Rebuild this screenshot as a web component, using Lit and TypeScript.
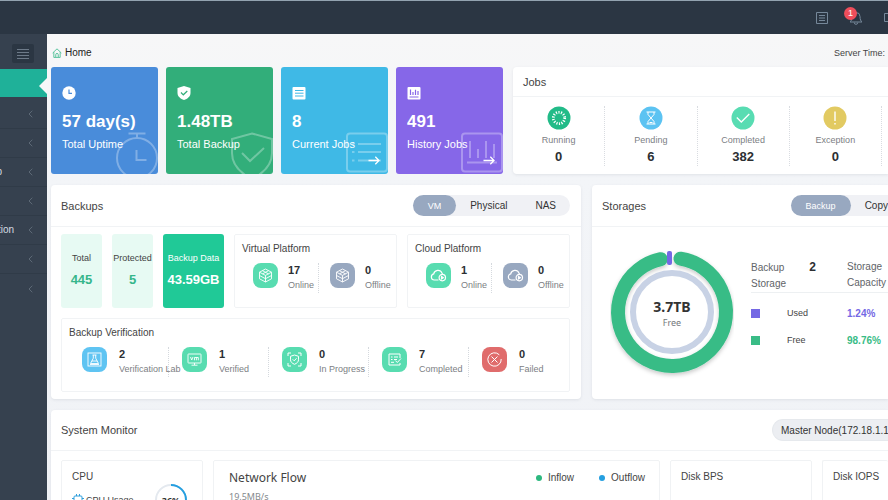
import { LitElement, html, css, svg, nothing, TemplateResult } from "lit";
import { customElement, property, state } from "lit/decorators.js";
import { classMap } from "lit/directives/class-map.js";

const icons: Record<string, TemplateResult> = {
  home: html`<svg viewBox="0 0 12 12" width="10" height="10" fill="none" stroke="currentColor"><path d="M.8 6 6 1l5.200 5M2.200 5v6.300h7.600V5"/><path d="M4.500 11V8a1.500 1.500 0 0 1 3 0v3"/></svg>`,
  list: html`<svg viewBox="0 0 12 12" width="12" height="12" fill="none" stroke="currentColor"><path d="M.5.5h11v11H.5zM3 3.500h6M3 6h6M3 8.500h6"/></svg>`,
  bell: html`<svg viewBox="0 0 14 14" width="14" height="14" fill="none" stroke="currentColor"><path d="M7 1.500a4 4 0 0 0-4 4c0 3-.8 4.500-2 5.500h12c-1.200-1-2-2.500-2-5.500a4 4 0 0 0-4-4zM5.200 11.500a1.800 1.800 0 0 0 3.600 0"/></svg>`,
  frame: html`<svg viewBox="0 0 4 12" width="4" height="12" fill="none" stroke="currentColor"><path d="M5 1.500H.5v8H5"/></svg>`,
  menu: html`<svg viewBox="0 0 12 12" width="12" height="12" stroke="currentColor"><path d="M0 1.500h12M0 4.500h12M0 7.500h12M0 10.500h12"/></svg>`,
  chevron: html`<svg viewBox="0 0 5 8" width="5" height="8" fill="none" stroke="currentColor"><path d="M4.300.7 1 4l3.300 3.300"/></svg>`,
  arrow: html`<svg viewBox="0 0 12 9" width="12" height="9" fill="none" stroke="currentColor" stroke-width="1.300"><path d="M.5 4.500h10.500M7.300.8 11 4.500 7.300 8.200"/></svg>`,
  clock: html`<svg viewBox="0 0 14 14" width="14" height="14"><circle cx="7" cy="7" r="6.700" fill="#fff"/><path d="M7 3.500V7.300h3" fill="none" stroke="#498cda" stroke-width="1.200"/></svg>`,
  shield: html`<svg viewBox="0 0 14 14" width="14" height="14"><path d="M7 0 13.500 2v5c0 3.500-3 5.800-6.500 7C3.500 12.800.5 10.500.5 7V2z" fill="#fff"/><path d="m4 6.500 2.300 2.300L10.300 5" fill="none" stroke="#32ae7a" stroke-width="1.200"/></svg>`,
  listSolid: html`<svg viewBox="0 0 14 14" width="14" height="14"><rect x=".5" y="1" width="13" height="12.500" rx="1" fill="#fff"/><path d="M3 4.500h8.500M3 7.200h8.500M3 10h8.500" stroke="#3fb9e6"/></svg>`,
  chartSolid: html`<svg viewBox="0 0 14 14" width="14" height="14"><rect x=".5" y="1" width="13" height="12.500" rx="1" fill="#fff"/><path d="M3.500 3.500v5.500M6 6v3M8.500 3.800V9M11 5v4M2.500 11h9" stroke="#8667e8" stroke-width="1.200"/></svg>`,
  clockBig: html`<svg viewBox="0 0 42 42" width="42" height="42" fill="none" stroke="#fff" stroke-width="2"><circle cx="21" cy="26" r="20"/><path d="M12.500 1.500h17M21 1.500V6M20.500 18v10h10"/></svg>`,
  shieldBig: html`<svg viewBox="0 0 42 42" width="42" height="42" fill="none" stroke="#fff" stroke-width="2"><path d="M21 1.500 41 7v14c0 12-8 20-20 26C9 41 1 33 1 21V7z"/><path d="m11 21 8 8 14-13"/></svg>`,
  listBig: html`<svg viewBox="0 0 42 42" width="42" height="42" fill="none" stroke="#fff" stroke-width="2"><rect x="1" y="1.500" width="40" height="38" rx="3"/><path d="M12 12h23M12 20h23M12 28.500h23M6 12h2.500M6 20h2.500M6 28.500h2.500"/></svg>`,
  chartBig: html`<svg viewBox="0 0 42 42" width="42" height="42" fill="none" stroke="#fff" stroke-width="2"><rect x="1" y="1.500" width="40" height="38" rx="3"/><path d="M9 9v17M17 17v9M25 9v17M33 12v14M6 30.500h30"/></svg>`,
  running: html`<svg viewBox="0 0 24 24" width="24" height="24"><circle cx="12" cy="12" r="11.500" fill="#22bb88"/><circle cx="12" cy="12" r="5.700" fill="none" stroke="#fff" stroke-width="2.800" stroke-dasharray="1.150 1.408"/></svg>`,
  pending: html`<svg viewBox="0 0 24 24" width="24" height="24"><circle cx="12" cy="12" r="11.500" fill="#5cc3f2"/><path d="M7.500 6h9M7.500 18h9M9 6v2.500L12 12l3-3.500V6M9 18v-2.500L12 12l3 3.500V18M10.500 16.500h3" fill="none" stroke="#fff"/></svg>`,
  completed: html`<svg viewBox="0 0 24 24" width="24" height="24"><circle cx="12" cy="12" r="11.500" fill="#58dcb2"/><path d="m5.800 11.500 4.500 4.500 8-8" fill="none" stroke="#fff" stroke-width="1.300"/></svg>`,
  exception: html`<svg viewBox="0 0 24 24" width="24" height="24"><circle cx="12" cy="12" r="11.500" fill="#e2ca62"/><path d="M12 5.500v9.500M12 17v1.500" stroke="#fff" stroke-width="1.400"/></svg>`,
  cube: html`<svg viewBox="0 0 15 15" width="15" height="15" fill="none" stroke="#fff" stroke-width=".9"><path d="M7.500 1 13.500 4.200v6.600l-6 3.200-6-3.200V4.200zM1.500 4.200l6 3.200 6-3.200M7.500 7.400V14M4.500 2.700l6 3.200M10.500 2.700l-6 3.200M1.500 7.500l6 3.200 6-3.200"/></svg>`,
  cloud: html`<svg viewBox="0 0 17 15" width="17" height="15" fill="none" stroke="#fff" stroke-width="1.200"><path d="M8.500 12H4.300a3.100 3.100 0 0 1-.6-6.100 4.400 4.400 0 0 1 8.300-.9l.5 1"/><circle cx="12.300" cy="9.600" r="3.200"/><path d="M11.500 8.500v2.500l1.800-1.200z" fill="#fff"/></svg>`,
  lab: html`<svg viewBox="0 0 15 15" width="15" height="15" fill="none" stroke="#fff" stroke-width=".9"><rect x="1" y="1" width="13" height="13"/><path d="M5.500 3h4M6.300 3v3.200L3.500 11.500h8L8.700 6.200V3M5 9h5M3 12.500h9"/></svg>`,
  vm: html`<svg viewBox="0 0 15 15" width="15" height="15" fill="none" stroke="#fff" stroke-width=".9"><rect x="1" y="2" width="13" height="9" rx=".5"/><path d="M4.500 13.200h6M7.500 11v2M3.500 5l1.200 3L6 5M7.500 8.300V5.500h3.800v2.800M9.400 5.500v2.800"/></svg>`,
  scan: html`<svg viewBox="0 0 15 15" width="15" height="15" fill="none" stroke="#fff" stroke-width="1"><path d="M1 4V1h3M11 1h3v3M14 11v3h-3M4 14H1v-3M7.500 3l4 1.300v3.500c0 2-1.500 3.500-4 4.500-2.500-1-4-2.500-4-4.500V4.300z"/><path d="m5.700 7.300 1.500 1.500 2.300-2.500"/></svg>`,
  check: html`<svg viewBox="0 0 15 15" width="15" height="15" fill="none" stroke="#fff" stroke-width="1"><path d="M13 6V2H2v11h11v-2M7 5h4M7 7.500h3M4 5h1.500M4 7.500h1.500M4 10.300h3M8.300 8.500l2 2L14 6.500"/></svg>`,
  fail: html`<svg viewBox="0 0 15 15" width="15" height="15" fill="none" stroke="#fff" stroke-width="1"><path d="M12.300 2.800a6.700 6.700 0 1 0 1.900 4.200M4.500 4.500l6 6M10.500 4.500l-6 6"/></svg>`,
  chip: html`<svg viewBox="0 0 12 12" width="12" height="12" fill="none" stroke="#2f9fdc"><rect x="2" y="2" width="8" height="8" rx="1"/><path d="M4.500 0v2M7.500 0v2M4.500 10v2M7.500 10v2M0 4.500h2M0 7.500h2M10 4.500h2M10 7.500h2"/></svg>`,
};

const base = css`
  * { box-sizing: border-box; }
  svg { display: block; flex: none; }
  button, select { font: inherit; color: inherit; border: 0; background: none; padding: 0; margin: 0; }
  button { cursor: pointer; }
  a { color: inherit; text-decoration: none; }
  h2, h3, p { margin: 0; font-weight: 400; }
`;

@customElement("app-header")
class AppHeader extends LitElement {
  static styles = [base, css`
    :host { display: flex; justify-content: flex-end; align-items: center; height: 34px; border-top: 1px solid #93a3b0; background: #2b3643; color: #76889a; gap: 21px; overflow: hidden; }
    button { position: relative; display: flex; }
    .badge { position: absolute; left: -5px; top: -4px; width: 13px; height: 13px; border-radius: 50%; background: #ef4e5b; color: #fff; font-size: 9px; line-height: 13px; text-align: center; }
  `];
  render() {
    return html`
      <button aria-label="Tasks">${icons.list}</button>
      <button aria-label="Alerts">${icons.bell}<span class="badge">1</span></button>
      <button aria-label="Display">${icons.frame}</button>`;
  }
}

@customElement("app-sidebar")
class AppSidebar extends LitElement {
  static styles = [base, css`
    :host { display: block; flex: none; width: 47px; background: #36414f; color: #d5dbe2; font-size: 10px; overflow: hidden; }
    .top { display: flex; height: 35px; padding: 10px 13px 0 12px; }
    .toggle { display: flex; align-items: center; justify-content: center; width: 22px; height: 19px; border-radius: 2px; background: #2b3643; color: #6d7a89; }
    .item { display: flex; align-items: center; height: 29px; border-bottom: 1px solid #303b48; padding-right: 14px; line-height: 14px; }
    .item svg { margin-left: auto; color: #5d6976; }
    .active { position: relative; height: 28px; border: 0; margin-bottom: 3px; background: #1fb199; }
    .active::after { content: ""; position: absolute; right: 0; top: 9px; border: 8px solid transparent; border-left: 0; border-right-color: #f6f7f8; }
    .last { border-bottom: 0; }
    .label { display: flex; justify-content: flex-end; width: 14px; }
    .edge { width: 2px; }
  `];
  render() {
    const items = ["", "", "p", "", "tion", "", ""];
    return html`
      <div class="top"><button class="toggle" aria-label="Toggle menu">${icons.menu}</button></div>
      <nav>
        <a class="item active" href="#home" aria-label="Home"></a>
        ${items.map((t, i) => html`<a class=${classMap({ item: true, last: i === items.length - 1 })} href="#menu">
          <span class=${classMap({ label: true, edge: t.length === 1 })}>${t}</span>${icons.chevron}</a>`)}
      </nav>`;
  }
}

@customElement("stat-card")
class StatCard extends LitElement {
  @property() tone = "blue";
  @property() value = "";
  @property() label = "";
  @property() icon = "clock";
  @property() mark = "clockBig";
  @property({ type: Boolean }) link = false;
  static styles = [base, css`
    :host { display: block; }
    .card { position: relative; height: 107px; padding: 19px 11px 0; border-radius: 3px; color: #fff; overflow: hidden; }
    .blue { background: #498cda; }
    .green { background: #32ae7a; }
    .sky { background: #3fb9e6; }
    .purple { background: #8667e8; }
    .value { margin-top: 11px; font-size: 17px; font-weight: 700; line-height: 22px; white-space: nowrap; }
    .label { margin-top: 4px; font-size: 11px; line-height: 14px; white-space: nowrap; }
    .mark { position: absolute; right: 0; bottom: 0; opacity: .3; }
    .go { position: absolute; right: 8px; bottom: 9px; }
  `];
  render() {
    return html`<div class="card ${this.tone}">
      <div class="mark">${icons[this.mark]}</div>
      ${icons[this.icon]}
      <div class="value">${this.value}</div>
      <div class="label">${this.label}</div>
      ${this.link ? html`<a class="go" href="#jobs" aria-label="Open ${this.label}">${icons.arrow}</a>` : nothing}
    </div>`;
  }
}

@customElement("segmented-tabs")
class SegmentedTabs extends LitElement {
  @property({ type: Array }) options: string[] = [];
  @property({ type: Boolean }) cut = false;
  @state() active = 0;
  static styles = [base, css`
    :host { display: block; }
    .tabs { display: flex; height: 21px; border-radius: 11px; background: #f0f1f5; font-size: 10px; color: #333; }
    .cut { border-radius: 11px 0 0 11px; }
    button { height: 21px; border-radius: 11px; padding: 0 14px; white-space: nowrap; }
    .cut button:last-child { padding-right: 0; }
    .on { font-size: 9px; padding: 0 15px; background: #98a8c0; color: #fff; }
  `];
  render() {
    return html`<div class=${classMap({ tabs: true, cut: this.cut })} role="tablist">
      ${this.options.map((o, i) => html`<button role="tab" aria-selected=${i === this.active} class=${classMap({ on: i === this.active })} @click=${() => (this.active = i)}>${o}</button>`)}
    </div>`;
  }
}

@customElement("metric-row")
class MetricRow extends LitElement {
  @property({ type: Array }) items: { n: string; label: string; icon: string; tone: string }[] = [];
  static styles = [base, css`
    :host { display: block; }
    .row { display: grid; grid-auto-flow: column; grid-auto-columns: minmax(0, 1fr); }
    .cell { display: flex; gap: 10px; height: 30px; padding-left: 11px; border-right: 1px dotted #d5d9de; white-space: nowrap; }
    .cell:last-child { border-right: 0; }
    :host([wide]) .cell { padding-left: 13px; gap: 12px; }
    .icon { flex: none; display: flex; align-items: center; justify-content: center; width: 25px; height: 25px; border-radius: 8px; }
    .mint { background: #58dcb0; }
    .slate { background: #98a8c0; }
    .sky { background: #5fc4f2; }
    .red { background: #e06c6c; }
    .n { font-size: 11px; font-weight: 700; line-height: 15px; color: #2c2f33; }
    .label { font-size: 9px; line-height: 14px; color: #7c8084; }
  `];
  render() {
    return html`<div class="row">${this.items.map((m) => html`<div class="cell">
      <div class="icon ${m.tone}">${icons[m.icon]}</div>
      <div><div class="n">${m.n}</div><div class="label">${m.label}</div></div>
    </div>`)}</div>`;
  }
}

@customElement("app-root")
class AppRoot extends LitElement {
  static styles = [base, css`
    :host { display: flex; flex-direction: column; height: 100vh; overflow: hidden; font-family: "Liberation Sans", Arial, sans-serif; font-size: 10px; color: #444; background: #f2f3f6; }
    .body { display: flex; flex: 1; min-height: 0; }
    main { flex: 1; min-width: 0; padding-left: 4px; overflow: hidden; background: linear-gradient(#f7f7f8, #f3f5f8 140px, #f0f2f6); }
    .crumbs { display: flex; justify-content: space-between; align-items: center; height: 33px; padding: 4px 3px 0 1px; }
    .home { display: flex; align-items: center; gap: 3px; color: #222; }
    .home svg { color: #3dbb8d; }
    .time { font-size: 9px; }
    .top { display: grid; grid-template-columns: repeat(4, 107px) minmax(0, 1fr); gap: 8px; }
    .top .panel { margin-left: 2px; }
    .middle { display: grid; grid-template-columns: 530px minmax(0, 1fr); gap: 11px; margin: 11px 0; }
    .panel { background: #fff; border-radius: 4px; box-shadow: 0 1px 3px rgba(60, 70, 90, .1); overflow: hidden; }
    .bleed { border-radius: 4px 0 0 4px; }
    .head { display: flex; align-items: center; justify-content: space-between; height: 42px; padding: 0 11px 0 10px; border-bottom: 1px solid #f1f3f5; }
    .bleed .head { padding-right: 0; }
    .low { height: 30px; }
    .mid { height: 41px; }
    h2 { font-size: 11px; line-height: 14px; }
    h3 { font-size: 10px; line-height: 14px; }
    .jobs { display: grid; grid-template-columns: repeat(4, minmax(0, 1fr)); padding: 9px 6px 0 0; text-align: center; }
    .job { display: flex; flex-direction: column; align-items: center; height: 60px; border-right: 1px dotted #d9dce1; }
    .joblabel { margin-top: 3px; font-size: 9px; line-height: 14px; color: #7c8084; }
    .jobn { margin-top: 2px; font-size: 13px; font-weight: 700; line-height: 16px; color: #2c2f33; }
    .backups { display: grid; grid-template-columns: 41px 41px 61px minmax(0, 1fr) minmax(0, 1fr); gap: 10px; padding: 7px 11px 7px 10px; }
    .tile { display: flex; flex-direction: column; align-items: center; height: 74px; padding-top: 17px; border-radius: 3px; background: #e7faf3; font-size: 9px; line-height: 14px; white-space: nowrap; }
    .tile b { margin-top: 7px; font-size: 13px; line-height: 16px; color: #36b68b; }
    .tile.solid, .tile.solid b { background: #20c997; color: #fff; }
    .box { height: 74px; padding: 7px 0 0 7px; border: 1px solid #f1f3f5; border-radius: 2px; }
    .box metric-row { margin-top: 7px; }
    .verify { grid-column: 1 / -1; }
    .store { display: flex; gap: 17px; padding: 24px 0 0 18px; }
    .donut { position: relative; flex: none; width: 124px; height: 128px; }
    .center { position: absolute; inset: 0 0 4px; display: flex; flex-direction: column; align-items: center; justify-content: center; font-family: "Noto Sans", sans-serif; font-size: 9px; line-height: 12px; color: #74787c; }
    .center b { font-size: 14px; line-height: 20px; color: #333; }
    table { flex: 1; min-width: 0; border-collapse: collapse; table-layout: fixed; margin-top: 8px; align-self: flex-start; }
    th, td { padding: 0; text-align: left; white-space: nowrap; }
    td { height: 27px; padding-top: 14px; vertical-align: middle; font-size: 9px; line-height: 13px; }
    th { height: 32px; font-size: 10px; line-height: 16px; font-weight: 400; color: #5f6468; border-bottom: 1px solid #edf0f2; vertical-align: top; }
    .c1 { width: 36px; }
    .c2 { width: 60px; }
    .count { padding-left: 25px; font-size: 12px; font-weight: 700; color: #2c2f33; }
    .sw { width: 9px; height: 9px; background: #39bc86; }
    .sw.used { background: #7468e4; }
    .pct { font-size: 10px; font-weight: 700; color: #39bc86; }
    .pct.used { color: #7468e4; }
    .node { appearance: none; height: 22px; padding: 0 0 0 8px; width: 116px; border-radius: 11px 0 0 11px; background: #eceef2; color: #333; font-size: 10px; border: 1px solid #e6e9ed; border-right: 0; }
    .monitor { display: grid; grid-template-columns: 142px minmax(0, 1fr) 142px 66px; gap: 10px; padding: 9px 0 0 10px; }
    .mcard { height: 90px; padding: 9px 14px 0 10px; border: 1px solid #f0f2f4; border-radius: 2px; white-space: nowrap; }
    .cut { padding-right: 0; border-right: 0; }
    .cpu { display: flex; align-items: center; justify-content: space-between; font-size: 9px; margin-top: -1px; }
    .usage { display: flex; align-items: center; gap: 2px; }
    .gauge { position: relative; }
    .gauge b { position: absolute; inset: 0; display: flex; align-items: center; justify-content: center; font-family: "Noto Sans", sans-serif; font-size: 9px; color: #333; }
    .net { padding-left: 15px; }
    .nethead { display: flex; align-items: center; justify-content: space-between; font-family: "Noto Sans", sans-serif; }
    .nethead h3 { font-size: 12px; line-height: 16px; }
    .legend { display: flex; gap: 25px; font-family: "Liberation Sans", Arial, sans-serif; font-size: 10px; line-height: 14px; }
    .legend span { display: flex; align-items: center; gap: 6px; }
    .legend i { width: 6px; height: 6px; border-radius: 50%; background: #2db87f; }
    .legend i.out { background: #259fe0; }
    .rate { margin-top: 4px; font-family: "Noto Sans", sans-serif; font-size: 9px; line-height: 14px; color: #85898d; }
  `];

  private arc(from: number, to: number, r: number) {
    const p = (d: number) => {
      const a = (d * Math.PI) / 180;
      return `${(62 + r * Math.sin(a)).toFixed(2)} ${(61 - r * Math.cos(a)).toFixed(2)}`;
    };
    return `M${p(from)} A${r} ${r} 0 1 1 ${p(to)}`;
  }

  render() {
    const jobs = [["running", "Running", "0"], ["pending", "Pending", "6"], ["completed", "Completed", "382"], ["exception", "Exception", "0"]];
    const platform = (icon: string, a: string) => [
      { n: a, label: "Online", icon, tone: "mint" },
      { n: "0", label: "Offline", icon, tone: "slate" },
    ];
    const verify = [
      { n: "2", label: "Verification Lab", icon: "lab", tone: "sky" },
      { n: "1", label: "Verified", icon: "vm", tone: "mint" },
      { n: "0", label: "In Progress", icon: "scan", tone: "mint" },
      { n: "7", label: "Completed", icon: "check", tone: "mint" },
      { n: "0", label: "Failed", icon: "fail", tone: "red" },
    ];
    return html`
      <app-header></app-header>
      <div class="body">
        <app-sidebar></app-sidebar>
        <main>
          <div class="crumbs"><a class="home" href="#home">${icons.home}Home</a><span class="time">Server Time:</span></div>
          <div class="top">
            <stat-card tone="blue" value="57 day(s)" label="Total Uptime" icon="clock" mark="clockBig"></stat-card>
            <stat-card tone="green" value="1.48TB" label="Total Backup" icon="shield" mark="shieldBig"></stat-card>
            <stat-card tone="sky" value="8" label="Current Jobs" icon="listSolid" mark="listBig" link></stat-card>
            <stat-card tone="purple" value="491" label="History Jobs" icon="chartSolid" mark="chartBig" link></stat-card>
            <section class="panel bleed">
              <div class="head low"><h2>Jobs</h2></div>
              <div class="jobs">${jobs.map(([i, l, n]) => html`<div class="job">${icons[i]}<div class="joblabel">${l}</div><div class="jobn">${n}</div></div>`)}</div>
            </section>
          </div>
          <div class="middle">
            <section class="panel">
              <div class="head"><h2>Backups</h2><segmented-tabs .options=${["VM", "Physical", "NAS"]}></segmented-tabs></div>
              <div class="backups">
                <div class="tile">Total<b>445</b></div>
                <div class="tile">Protected<b>5</b></div>
                <div class="tile solid">Backup Data<b>43.59GB</b></div>
                <div class="box"><h3>Virtual Platform</h3><metric-row .items=${platform("cube", "17")}></metric-row></div>
                <div class="box"><h3>Cloud Platform</h3><metric-row .items=${platform("cloud", "1")}></metric-row></div>
                <div class="box verify"><h3>Backup Verification</h3><metric-row wide .items=${verify}></metric-row></div>
              </div>
            </section>
            <section class="panel bleed">
              <div class="head"><h2>Storages</h2><segmented-tabs cut .options=${["Backup", "Copy"]}></segmented-tabs></div>
              <div class="store">
                <div class="donut">
                  <svg viewBox="0 0 124 128" width="124" height="128" fill="none">
                    <defs><filter id="sh" x="-10%" y="-10%" width="120%" height="125%"><feDropShadow dx="0" dy="2" stdDeviation="2" flood-color="#000" flood-opacity=".22"/></filter></defs>
                    ${svg`<path d=${this.arc(9, 348, 54)} stroke="#39bc86" stroke-width="14" stroke-linecap="round" filter="url(#sh)"/>`}
                    <circle cx="62" cy="61" r="39" stroke="#c8d2e5" stroke-width="6"/>
                    <rect x="57" y="0" width="5" height="14" rx="2" fill="#7468e4"/>
                  </svg>
                  <div class="center"><b>3.7TB</b>Free</div>
                </div>
                <table>
                  <colgroup><col class="c1"><col class="c2"><col></colgroup>
                  <tr><th colspan="2">Backup<span class="count">2</span><br>Storage</th><th>Storage<br>Capacity</th></tr>
                  <tr><td><div class="sw used"></div></td><td>Used</td><td class="pct used">1.24%</td></tr>
                  <tr><td><div class="sw"></div></td><td>Free</td><td class="pct">98.76%</td></tr>
                </table>
              </div>
            </section>
          </div>
          <section class="panel bleed">
            <div class="head mid"><h2>System Monitor</h2><select class="node" aria-label="Node"><option>Master Node(172.18.1.1</option></select></div>
            <div class="monitor">
              <div class="mcard"><h3>CPU</h3>
                <div class="cpu"><span class="usage">${icons.chip}CPU Usage</span>
                  <div class="gauge"><svg viewBox="0 0 34 34" width="34" height="34" fill="none" stroke-width="2"><circle cx="17" cy="17" r="15" stroke="#e4e9ef"/><circle cx="17" cy="17" r="15" stroke="#259fe0" pathLength="100" stroke-dasharray="36 64" transform="rotate(-90 17 17)"/></svg><b>36%</b></div>
                </div>
              </div>
              <div class="mcard net"><div class="nethead"><h3>Network Flow</h3><div class="legend"><span><i></i>Inflow</span><span><i class="out"></i>Outflow</span></div></div><p class="rate">19.5MB/s</p></div>
              <div class="mcard"><h3>Disk BPS</h3></div>
              <div class="mcard cut"><h3>Disk IOPS</h3></div>
            </div>
          </section>
        </main>
      </div>`;
  }
}
